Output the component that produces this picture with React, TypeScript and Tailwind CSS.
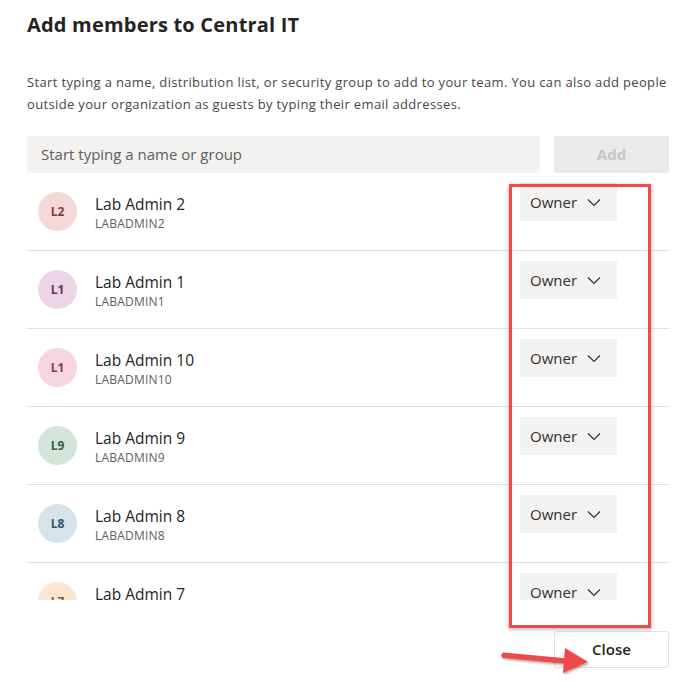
import React from "react";

const members = [
  { id: 1, name: "Lab Admin 2", user: "LABADMIN2", initials: "L2", bg: "bg-[#f4d9da]", fg: "text-[#8a3a3f]" },
  { id: 2, name: "Lab Admin 1", user: "LABADMIN1", initials: "L1", bg: "bg-[#ecd6e5]", fg: "text-[#6e2f5e]" },
  { id: 3, name: "Lab Admin 10", user: "LABADMIN10", initials: "L1", bg: "bg-[#f6d6de]", fg: "text-[#8f3650]" },
  { id: 4, name: "Lab Admin 9", user: "LABADMIN9", initials: "L9", bg: "bg-[#d3e5da]", fg: "text-[#2f5a44]" },
  { id: 5, name: "Lab Admin 8", user: "LABADMIN8", initials: "L8", bg: "bg-[#d5e3ea]", fg: "text-[#35566a]" },
  { id: 6, name: "Lab Admin 7", user: "LABADMIN7", initials: "L7", bg: "bg-[#fbe6d3]", fg: "text-[#8a5530]" },
];

const Chevron = () => (
  <svg width="14" height="9" viewBox="0 0 14 9" fill="none">
    <path d="M1 1.5l6 6 6-6" stroke="#323130" strokeWidth="1.2" />
  </svg>
);

const MemberRow = ({ m }: { m: (typeof members)[number] }) => (
  <div className="flex h-[78px] shrink-0 border-b border-[#e1dfdd]">
    <div className="flex flex-1 items-start pl-[11px] pt-[19px]">
      <div
        className={`flex h-[39px] w-[39px] items-center justify-center rounded-full text-[12px] font-bold ${m.bg} ${m.fg}`}
      >
        {m.initials}
      </div>
      <div className="ml-[18px] flex flex-col pt-[1px]">
        <span className="text-[15.5px] leading-[22px] text-[#252423]">{m.name}</span>
        <span className="text-[12px] leading-[18px] tracking-[0.2px] text-[#605e5c]">{m.user}</span>
      </div>
    </div>
    <div className="pr-[52px] pt-[10px]">
      <div className="flex h-[38px] w-[97px] items-center gap-[10px] bg-[#f3f2f1] pl-[10px]">
        <span className="text-[15px] text-[#323130]">Owner</span>
        <Chevron />
      </div>
    </div>
  </div>
);

export default function App() {
  return (
    <div
      className="relative h-[694px] w-[689px] overflow-hidden bg-white pl-[27px] pr-[20px]"
      style={{ fontFamily: '"Open Sans", "Noto Sans", sans-serif' }}
    >
      <h1 className="pt-[11px] text-[20px] font-bold leading-[28px] tracking-[0.2px] text-[#252423]">
        Add members to Central IT
      </h1>
      <p className="mt-[32px] whitespace-nowrap text-[13px] leading-[22px] tracking-[0.35px] text-[#484644]">
        Start typing a name, distribution list, or security group to add to your team. You can also add people
        <br />
        outside your organization as guests by typing their email addresses.
      </p>
      <div className="mt-[21px] flex gap-[14px]">
        <div className="flex h-[37px] flex-1 items-center rounded-[3px] bg-[#f3f2f1] pl-[14px] text-[15px] text-[#605e5c]">
          Start typing a name or group
        </div>
        <button className="h-[37px] w-[115px] rounded-[3px] bg-[#ebeae9] text-[15px] font-bold text-[#c8c6c4]">
          Add
        </button>
      </div>
      <div className="flex h-[427px] flex-col overflow-hidden">
        {members.map((m) => (
          <MemberRow key={m.id} m={m} />
        ))}
      </div>
      <div className="mt-[31px] flex justify-end">
        <button className="h-[37px] w-[115px] rounded-[3px] border border-[#e1dfdd] bg-white text-[15px] font-semibold text-[#252423]">
          Close
        </button>
      </div>

      {/* annotation: red highlight box */}
      <div className="pointer-events-none absolute left-[509px] top-[184px] h-[444px] w-[142px] border-[3px] border-[#f34848] shadow-[0_1px_4px_rgba(0,0,0,0.35)]" />

      {/* annotation: red arrow */}
      <svg className="pointer-events-none absolute left-[496px] top-[644px]" width="100" height="34" viewBox="0 0 100 34">
        <defs>
          <filter id="sh" x="-10%" y="-30%" width="120%" height="160%">
            <feDropShadow dx="1" dy="1.5" stdDeviation="1.2" floodColor="#000" floodOpacity="0.35" />
          </filter>
        </defs>
        <g filter="url(#sh)" fill="#f04848">
          <path d="M7 8.5 L72 14.5 L71.5 20 L6.5 14 Q4 11 7 8.5 Z" />
          <path d="M69 4 L92 18 L67 29 Z" />
        </g>
      </svg>
    </div>
  );
}
